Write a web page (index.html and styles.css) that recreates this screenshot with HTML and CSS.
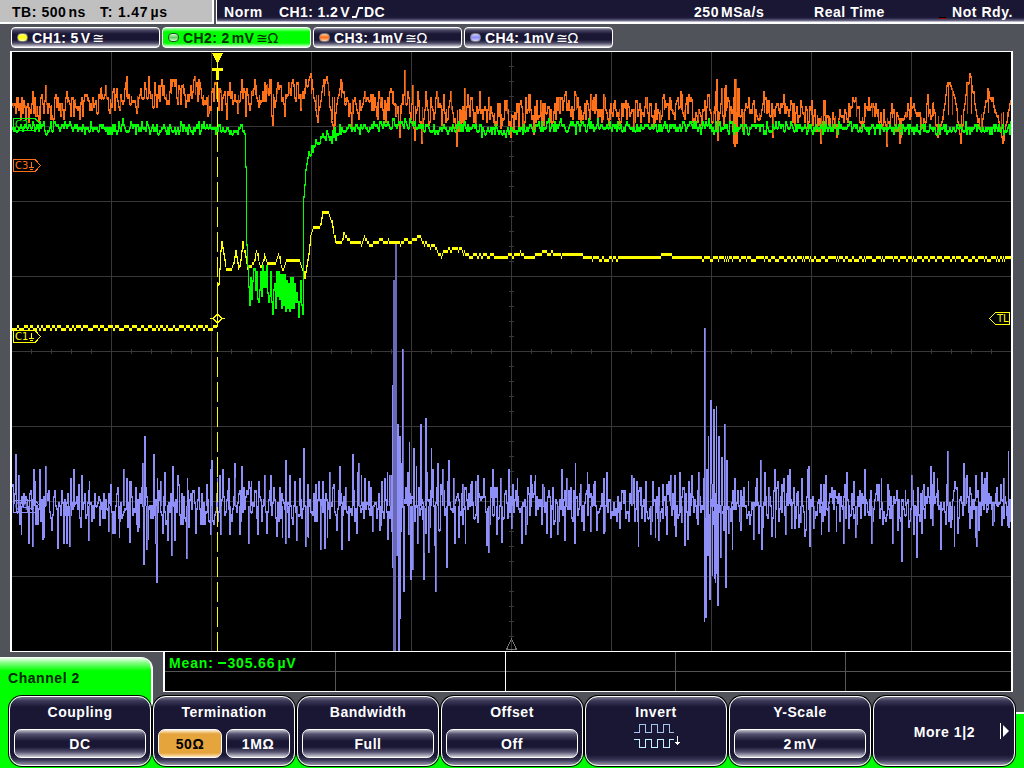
FILE: index.html
```html
<!DOCTYPE html>
<html lang="en">
<head>
<meta charset="utf-8">
<title>Oscilloscope</title>
<link rel="stylesheet" href="styles.css">
</head>
<body>
<div class="scope">
  <header class="status">
    <div class="timebase"><span class="tb">TB: 500<i></i>ns</span><span class="tt">T: 1.47<i></i>µs</span></div>
    <div class="trigger">
      <span class="mode">Norm</span>
      <span class="source">CH1: 1.2<i></i>V<svg class="edge" width="11" height="12" viewBox="0 0 11 12"><path d="M0 11H4L7 2H11" fill="none" stroke="#fff" stroke-width="1.8"/></svg>DC</span>
      <span class="rate">250<i></i>MSa/s</span>
      <span class="acq">Real Time</span>
      <span class="led"></span>
      <span class="ready">Not Rdy.</span>
    </div>
  </header>
  <nav class="channels">
    <div class="chan"><b class="dot yellow"></b><span>CH1: 5<i></i>V</span><em>≅</em></div>
    <div class="chan active"><b class="dot green"></b><span>CH2: 2<i></i>mV</span><em>≅Ω</em></div>
    <div class="chan"><b class="dot orange"></b><span>CH3: 1mV</span><em>≅Ω</em></div>
    <div class="chan"><b class="dot blue"></b><span>CH4: 1mV</span><em>≅Ω</em></div>
  </nav>
  <main class="plot">
    <svg id="graph" width="999" height="599" viewBox="12 52 999 599" shape-rendering="crispEdges">
      <path id="grid" fill="#383838"/>
      <path id="c4" fill="#8f8ff8"/>
      <path id="c4dim" fill="#6868b4"/>
      <path id="c3" fill="#ff7119"/>
      <path id="c3dim" fill="#b85212"/>
      <path id="c1" fill="#ffff00"/>
      <path id="c2" fill="#00ff00"/>
      <path d="M217.5 82V651" stroke="#ffff00" stroke-dasharray="20 5"/>
      <path d="M212 53H223L217.5 64ZM217 63h1v5h5v3h-4v9h-3v-9h-4v-3h5Z" fill="#ffff00"/>
      <g fill="none">
        <path d="M210 318.5H213M222 318.5H225M213 318.5L217.5 314L222 318.5L217.5 323Z" stroke="#ffff00"/>
        <path d="M1009.500 312.500H995.500L989.500 318.500L995.500 324.500H1009.500Z" stroke="#ffff00"/>
        <path d="M13.500 118.500H35L40.500 124.500L35 130.500H13.500Z" stroke="#00ff00"/>
        <path d="M13.500 159.500H35L40.500 165.500L35 171.500H13.500ZM31.500 162V167M29 167.500H34M30 169.500H33" stroke="#ff7119"/>
        <path d="M13.500 330.500H35L40.500 336.500L35 342.500H13.500ZM31.500 333V338M29 338.500H34M30 340.500H33" stroke="#ffff00"/>
        <path d="M13.500 500.500H35L40.500 506.500L35 512.500H13.500ZM29 508.500H34" stroke="#8f8ff8"/>
        <path d="M506.500 649.500L511.500 639L516.500 649.500Z" stroke="#777"/>
      </g>
      <g class="tag">
        <text x="15" y="128" fill="#00ff00">C2</text>
        <text x="15" y="169" fill="#ff7119">C3</text>
        <text x="15" y="340" fill="#ffff00">C1</text>
        <text x="15" y="510" fill="#8f8ff8">C4</text>
        <text x="997" y="322" fill="#ffff00">TL</text>
      </g>
    </svg>
  </main>
  <section class="lower">
    <h1 class="tab">Channel 2</h1>
    <div class="measure">
      <div class="cell"><span>Mean: <s></s>305.66<i></i>µV</span></div><div class="cell mid"></div><div class="cell"></div><div class="cell"></div><div class="cell last"></div>
    </div>
  </section>
  <footer class="menu">
    <div class="key"><h2>Coupling</h2><div class="opts"><span class="opt">DC</span></div></div>
    <div class="key"><h2>Termination</h2><div class="opts"><span class="opt sel">50Ω</span><span class="opt">1MΩ</span></div></div>
    <div class="key"><h2>Bandwidth</h2><div class="opts"><span class="opt">Full</span></div></div>
    <div class="key"><h2>Offset</h2><div class="opts"><span class="opt">Off</span></div></div>
    <div class="key"><h2>Invert</h2>
      <svg class="wave" width="48" height="26" viewBox="0 0 48 26" shape-rendering="crispEdges" fill="none"><path d="M0 8.500H5.500V.5H11.500V8.500H17.500V.5H23.500V8.500H29.500V.5H35.500V8.500H40" stroke="#a4c4ee"/><path d="M0 15.500H5.500V23.500H11.500V15.500H17.500V23.500H23.500V15.500H29.500V23.500H35.500V15.500H40" stroke="#c4f4ff"/><path d="M43.500 12V21M41 18.500H46M42 19.500H45" stroke="#fff"/></svg>
    </div>
    <div class="key"><h2>Y-Scale</h2><div class="opts"><span class="opt">2<i></i>mV</span></div></div>
    <div class="key more"><span>More 1|2</span><svg width="10" height="16" viewBox="0 0 10 16"><path d="M.5 0V16" stroke="#fff"/><path d="M3 2L9 8L3 14Z" fill="#fff"/></svg></div>
  </footer>
</div>
<script src="traces.js"></script>
</body>
</html>
```
FILE: styles.css
```css
* { box-sizing: border-box; }
body { margin: 0; background: #50545a; }
.scope {
  width: 1024px; height: 768px; overflow: hidden;
  display: flex; flex-direction: column;
  background: #50545a; color: #fff;
  font: bold 14px/16px "Liberation Sans", Arial, sans-serif;
  letter-spacing: .55px; white-space: nowrap;
}
i { display: inline-block; width: 2px; }
s { display: inline-block; width: 8px; height: 2px; margin: 0 1px 4px 0; background: currentColor; }
h1, h2 { margin: 0; font-size: 14px; line-height: 16px; }

.status { display: flex; height: 24px; gap: 2px; flex: none; }
.timebase {
  width: 214px; padding: 4px 0 0 12px; display: flex; color: #000;
  background: #c0c0c0; border-right: 2px solid #fff; border-bottom: 2px solid #fff;
}
.tb { width: 88px; }
.tt { letter-spacing: .8px; }
.trigger {
  flex: 1; display: flex; padding: 4px 0 0 7px;
  background: linear-gradient(#1a1735 0 16px, #1f1c3c 18px, #777594 21px, #fff 22px);
  border-left: 1px solid #fff;
}
.mode { width: 55px; }
.source { width: 415px; }
.source, .chan span { letter-spacing: .4px; }
.edge { margin: 0 1px -1px 2px; }
.rate { width: 120px; }
.acq { width: 125px; }
.led { width: 7px; height: 2px; margin: 13px 6px 0 0; background: #a00000; border-top: 1px solid #000; }

.channels { display: flex; gap: 2px; height: 27px; flex: none; padding: 3px 0 0 11px; }
.chan {
  width: 149px; height: 21px; display: flex; align-items: center; padding: 0 0 0 5px;
  border: 1px solid #fff; border-radius: 4px;
  background: linear-gradient(#aaa9b8 0, #4c4965 2px, #1a1735 6px, #1a1735 12px, #4c4965 15px, #b5b4c1 18px, #fff 19px);
}
.chan.active { background: linear-gradient(#b0ffb0, #00ff00 4px, #00ff00 15px, #e0ffe0 19px); color: #003000; }
.chan em { font: normal 14px/16px "DejaVu Sans", sans-serif; letter-spacing: -.5px; margin-left: 2px; }
.dot { width: 11px; height: 9px; margin-right: 4px; border: 1px solid #777; border-radius: 4px; }
.yellow { background: linear-gradient(#ffff80, #ffff00, #ffffb0); }
.green { background: linear-gradient(#d0ffd0, #60d060, #d8ffd8); border-color: #205020; }
.orange { background: linear-gradient(#ffc090, #ff7119, #ffd0b0); }
.blue { background: linear-gradient(#c8c8ff, #8f8ff8, #d0d0ff); }

.plot { width: 1003px; height: 601px; margin-left: 10px; flex: none; background: #000; border: solid #fff; border-width: 1px 2px; display: flex; }
.tag { font: 10px "DejaVu Sans", sans-serif; letter-spacing: 0; }

.lower { height: 40px; flex: none; display: flex; gap: 10px; }
.tab {
  width: 153px; height: 52px; margin-top: 5px; padding: 13px 0 0 8px; color: #002800;
  background: linear-gradient(#fff, #80ff80 6px, #00ff00 14px);
  border-right: 2px solid #fff; border-radius: 0 12px 0 0;
}
.measure {
  width: 850px; height: 40px; display: flex; border: solid #fff; border-width: 0 2px 1px;
  background: linear-gradient(#000 19px, #555 19px 20px, #000 20px);
}
.cell { width: 170px; flex: none; border-right: 1px solid #555; padding: 3px 0 0 4px; color: #00ff00; letter-spacing: .85px; }
.cell:first-child { width: 171px; }
.cell.mid { border-color: #fff; }
.cell.last { border: 0; width: 165px; }

.menu {
  flex: 1; display: flex; gap: 2px; padding: 4px 0 2px 9px; position: relative;
  background:
    linear-gradient(#00ff00, #00ff00) 0 0 / 8px 100% no-repeat,
    linear-gradient(#00ff00, #00ff00) 8px 0 / 143px 14px no-repeat,
    linear-gradient(#fff, #fff) 151px 0 / 2px 14px no-repeat,
    linear-gradient(#fff 0 2px, #00ff00 2px) 1016px 20px / 8px 56px no-repeat,
    linear-gradient(#00ff00, #00ff00) 0 63px / 100% 14px no-repeat, #50545a;
}
.key {
  width: 142px; height: 70px; border: 1px solid #fff; border-radius: 13px;
  box-shadow: 0 0 0 1px #000; padding: 7px 4px 0; text-align: center;
  background: linear-gradient(#77758d 0, #3a3757 4px, #1a1735 10px, #1a1735 58px, #3a3757 63px, #9896a8 68px);
}
.opts { display: flex; gap: 4px; margin-top: 9px; }
.opt {
  flex: 1; height: 29px; padding-top: 6px; border: 1px solid #fff; border-radius: 7px;
  background: linear-gradient(#c0bfca 0, #555270 4px, #1a1735 11px, #1a1735 17px, #555270 22px, #d0cfd8 27px);
}
.opt.sel { color: #000; background: linear-gradient(#fff0d8 0, #e6a43d 4px, #e6a43d 23px, #ffe8c0 27px); }
.wave { display: block; margin: 4px 0 0 44px; }
.more { display: flex; align-items: flex-start; justify-content: flex-end; padding: 27px 4px 0 0; }
.more span { margin-right: 25px; }
.more svg { margin-top: -1px; }
```
FILE: traces.js
```js
// Seeded generator keeps the noise identical on each load.
let seed = 4711;
const rnd = () => ((seed = (seed * 1103515245 + 12345) % 2147483648) / 2147483648);
const noise = () => rnd() + rnd() + rnd() - 1.5;
const pairs = s => s.trim().split(/\s+/).map(p => p.split(",").map(Number));
const set = (id, d) => document.getElementById(id).setAttribute("d", d);
const rect = (x, y, w, h) => `M${x} ${y}h${w}v${h}h${-w}z`;

function interpolate(pts, x) {
  let i = 1;
  while (i < pts.length - 1 && pts[i][0] < x) i++;
  const [x0, y0] = pts[i - 1], [x1, y1] = pts[i];
  return y0 + (y1 - y0) * Math.max(0, Math.min(1, (x - x0) / (x1 - x0 || 1)));
}

// One column per pixel; levels fall on the 3px steps of the converter.
function trace(id, level, from = 12) {
  let d = "", prev = null;
  for (let x = from; x < 1011; x++) {
    const y = Math.round((level(x) - 1) / 3) * 3 + 1;
    if (prev === null) prev = y;
    // A small step shows only the new level; a large one joins both.
    if (id === "c1" && Math.abs(y - prev) <= 3) d += rect(x, y, 1, 3);
    else d += rect(x, Math.min(y, prev), 1, Math.abs(y - prev) + (y === prev ? 3 : 2));
    prev = y;
  }
  set(id, d);
}

let g = "";
for (let x = 111; x < 1011; x += 100) g += rect(x, 52, 1, 599);
for (let y = 126; y < 651; y += 75) g += rect(12, y, 999, 1);
for (let y = 66; y < 651; y += 15) g += rect(509, y, 5, 1);
for (let x = 31; x < 1011; x += 20) g += rect(x, 349, 1, 5);
set("grid", g);

const yellow = pairs(`216,328 217,285 218,283 219,268 220,250 221,241 224,258 226,269 232,266 235,250 238,269 240,258 242,241 245,255 247,268 250,265 253,262 256,250 260,266 262,262 264,254 268,263 274,263 278,253 282,269 286,260 299,260 302,267 304,276 307,260 310,236 313,227 319,227 322,211 328,211 331,221 335,241 341,241 343,232 346,236 351,241 361,241 364,235 368,241 374,241 378,238 385,238 390,240 400,241 403,239 415,238 418,233 424,241 430,244 432,241 435,247 441,253 447,248 455,246 461,248 467,254 490,253 502,256 520,251 528,256 538,251 552,251 560,253 578,252 590,256 1011,256`);
let hold = 0, alt = 0;
const jitter = () => { if (hold-- <= 0) { alt = 1 - alt; hold = 1 + Math.floor(rnd() * 4); } return alt; };
trace("c1", x => {
  if (x < 217) return 325 + 3 * jitter();
  if (x < 360) return interpolate(yellow, x);
  if (x < 590) return interpolate(yellow, x) + 1.6 * jitter();
  if (x > 620 && x < 700) return x > 660 && x < 672 ? 253 : 256;
  return 256 + (jitter() && rnd() < .75 ? 3 : 0);
});

const green = pairs(`12,127 60,125 110,128 180,127 230,129 243,129 244,134 245,165 246,245 248,285 264,282 285,291 301,299 302,260 303,195 305,170 307,155 312,145 320,139 335,133 345,128 375,125 400,124 430,127 460,127 500,130 540,126 570,124 650,127 690,126 750,127 820,127 880,128 1011,128`);
const dips = { 249: 303, 253: 268, 258: 301, 262: 264, 264: 270, 268: 300, 272: 314, 276: 271, 280: 274, 281: 308, 287: 306, 290: 278, 298: 317, 300: 280, 302: 314 };
trace("c2", x => dips[x] || interpolate(green, x) + (x > 248 && x < 302 ? (x % 2 ? 1 : -1) * (3 + rnd() * 16) : noise() * (x > 242 && x < 307 ? 1 : 6)));

const orange = pairs(`12,103 16,97 20,118 24,105 28,122 32,91 35,116 38,120 41,94 45,85 50,118 55,95 60,114 66,91 70,116 74,99 79,117 86,94 91,108 97,111 100,87 105,85 109,113 115,94 119,109 125,82 130,102 136,111 143,97 148,76 150,98 156,105 161,79 165,98 170,79 175,79 177,102 182,84 186,100 194,76 198,80 202,104 207,114 212,88 215,82 220,90 226,117 230,98 237,113 241,79 245,114 251,90 254,79 258,105 266,84 269,79 272,123 276,88 280,85 284,114 288,82 293,84 297,82 300,108 304,88 310,73 315,108 317,120 323,80 327,82 331,120 333,130 337,98 340,79 344,102 351,127 354,97 358,117 364,91 370,95 376,116 379,97 385,120 391,91 395,116 399,135 402,95 404,70 408,97 410,117 412,85 414,138 417,92 421,141 425,91 429,122 436,91 440,105 445,120 450,91 456,145 460,125 464,88 468,105 471,97 475,128 479,91 482,117 488,98 493,122 500,128 506,101 510,135 516,104 522,128 528,94 533,132 540,100 545,113 552,120 558,98 565,91 570,116 575,94 580,122 584,103 590,95 595,94 601,120 603,94 608,125 613,103 618,117 624,105 630,113 633,127 636,100 640,122 645,97 648,120 653,127 659,122 663,94 669,97 672,113 677,97 680,91 683,115 686,97 691,99 697,120 702,110 708,94 712,122 716,79 717,138 721,88 723,125 725,85 729,120 733,98 734,144 735,79 736,141 738,88 742,127 748,97 754,120 758,118 763,91 767,100 772,135 778,108 783,94 788,115 793,103 797,120 803,112 810,109 816,130 820,141 823,100 828,125 834,127 841,115 848,103 855,97 861,127 864,103 871,103 876,112 882,125 886,144 891,103 899,141 905,112 910,97 915,112 920,127 927,94 932,102 937,135 941,120 947,82 951,88 956,108 960,141 966,83 970,76 975,110 980,130 987,88 993,105 1000,130 1002,141 1006,120 1010,100`);
const peaks = new Set(orange.map(p => p[0]));
const baseline = pairs(`12,108 80,102 150,94 215,95 310,94 400,105 500,114 600,109 700,110 800,115 900,118 1011,112`);
// Between the listed extremes the signal stays near its baseline.
trace("c3", x => {
  if (peaks.has(x)) return interpolate(orange, x);
  if ((x > 308 && x < 346) || x > 936) return interpolate(orange, x) + noise() * 5;
  return interpolate(orange, x) * .45 + interpolate(baseline, x) * .55 + noise() * 14;
});

const bursts = pairs(`18,475 21,535 28,544 32,547 33,481 44,538 45,466 63,544 66,544 69,547 70,478 73,469 88,541 89,481 99,526 108,532 110,484 119,538 123,469 129,481 137,532 142,463 143,565 144,436 146,550 148,540 153,454 155,544 156,583 157,478 160,481 164,472 167,541 171,556 172,466 174,541 186,559 187,478 206,484 210,535 211,460 217,478 220,535 228,478 229,535 234,478 239,535 241,466 248,544 251,481 257,535 264,475 270,475 282,538 285,544 288,538 289,475 296,541 299,478 303,448 305,547 308,538 315,484 320,550 322,481 327,538 329,472 339,466 341,550 345,487 348,541 352,454 358,463 361,475 368,481 372,532 380,526 387,472 389,475 391,532 392,568 402,349 403,592 407,472 408,535 409,442 410,580 412,570 413,448 416,466 417,544 420,424 422,520 423,553 423,580 425,418 428,553 431,448 434,546 435,592 437,463 440,529 442,469 446,568 448,460 453,478 454,544 458,538 462,484 465,544 471,481 475,481 477,523 478,481 488,553 492,469 496,535 500,478 501,535 508,469 511,529 517,478 521,544 525,535 530,475 535,475 542,484 550,538 552,487 557,535 561,469 564,541 566,478 575,463 574,544 580,484 583,526 587,472 590,532 593,484 603,478 604,532 606,472 619,529 631,475 638,547 640,490 650,535 652,481 655,538 658,541 662,484 666,535 670,475 674,526 679,472 681,523 691,493 697,525 698,472 703,478 719,436 720,558 721,457 723,531 724,424 725,588 726,460 728,534 732,550 734,478 739,522 740,490 748,481 753,540 756,478 758,534 760,460 761,550 764,472 768,487 775,538 781,484 785,535 787,475 790,481 791,529 794,529 797,491 800,523 808,466 809,547 813,529 821,535 823,484 828,532 833,490 836,532 843,544 848,529 853,481 855,538 864,469 870,490 871,544 881,478 888,490 892,544 901,562 905,490 911,475 913,535 916,558 922,490 923,484 930,466 932,526 937,478 940,550 947,451 951,520 954,547 964,478 969,529 975,538 976,547 982,484 986,472 992,526 996,490 1001,526 1003,478 1007,526 1008,451`);
trace("c4", x => 504 + noise() * (x % 3 ? 22 : 36));
let bright = document.getElementById("c4").getAttribute("d"), dim = "";
bursts.forEach(([x, y], i) => {
  const top = Math.min(y, 506), h = Math.abs(y - 506);
  bright += rect(x, top, i % 4 === 1 ? 1 : 2, h);
  if (i % 3 === 0) dim += rect(x + 1, top, 1, h);
});
// Full-height edges of the two main bursts.
[[393,280,371],[394,280,371],[395,243,408],[396,243,313]].forEach(([x, y, h]) => dim += rect(x, y, 1, h));
[[392,385,183],[397,424,132],[398,424,227],[399,436,215],[400,436,183],[401,463,69],[704,328,294],[705,328,290],[706,469,149],[707,469,87],[708,436,120],[709,532,68],[710,400,200],[711,400,84],[712,484,92],[713,409,98],[714,409,170],[715,508,75],[716,406,168],[717,504,102],[718,436,170]].forEach(([x, y, h]) => bright += rect(x, y, 1, h));
dim += rect(705, 328, 1, 190);
set("c4", bright);
set("c4dim", dim);

let solid = document.getElementById("c3").getAttribute("d"), shade = "";
orange.forEach(([x, y], i) => {
  const mid = interpolate(baseline, x), top = Math.min(y, mid), h = Math.abs(y - mid);
  if (i % 3 === 0) shade += rect(x + 1, Math.round(top), 1, Math.round(h));
  else solid += rect(x + 1, Math.round(top), 1, Math.round(h));
});
for (const [x, y, h] of [[733, 100, 44], [734, 79, 65], [735, 79, 62], [736, 88, 53], [737, 88, 53], [715, 91, 40], [724, 88, 36]]) solid += rect(x, y, 1, h);
set("c3", solid);
set("c3dim", shade);
```
